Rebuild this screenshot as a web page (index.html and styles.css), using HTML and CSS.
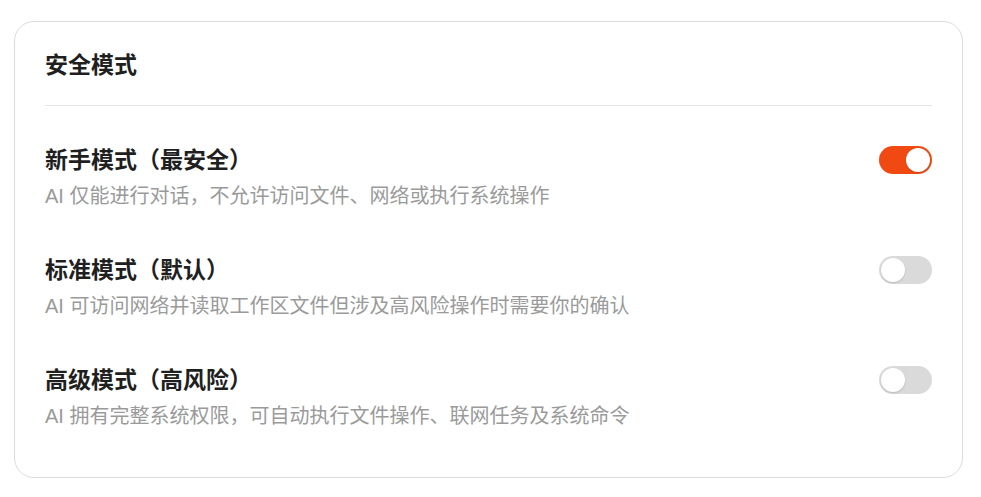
FILE: index.html
```html
<!DOCTYPE html>
<html lang="zh-CN">
<head>
    <meta charset="UTF-8" />
    <meta name="viewport" content="width=device-width, initial-scale=1" />
    <title>安全模式</title>
    <link rel="stylesheet" href="styles.css">
</head>
<body>
    <div class="card">
        <div class="card-header">
            <h2>安全模式</h2>
        </div>

        <div class="mode-list">
            <div class="mode">
                <div class="mode-text">
                    <div class="mode-title">新手模式（最安全）</div>
                    <div class="mode-desc">AI 仅能进行对话，不允许访问文件、网络或执行系统操作</div>
                </div>
                <div class="switch on"><span class="knob"></span></div>
            </div>

            <div class="mode">
                <div class="mode-text">
                    <div class="mode-title">标准模式（默认）</div>
                    <div class="mode-desc">AI 可访问网络并读取工作区文件但涉及高风险操作时需要你的确认</div>
                </div>
                <div class="switch"><span class="knob"></span></div>
            </div>

            <div class="mode">
                <div class="mode-text">
                    <div class="mode-title">高级模式（高风险）</div>
                    <div class="mode-desc">AI 拥有完整系统权限，可自动执行文件操作、联网任务及系统命令</div>
                </div>
                <div class="switch"><span class="knob"></span></div>
            </div>
        </div>
    </div>
</body>
</html>
```

FILE: styles.css
```css
body {
    margin: 0;
    padding: 21px 18px 0 14px;
    background: #fff;
    font-family: "Liberation Sans", "Noto Sans CJK SC", sans-serif;
    color: #1f1f1f;
}

.card {
    border: 1px solid #dcdcdc;
    border-radius: 20px;
    padding: 0 30px 47px 30px;
}

.card-header {
    padding-top: 28px;
    padding-bottom: 25px;
    border-bottom: 1px solid #e5e5e5;
}

h2 {
    margin: 0;
    font-size: 23px;
    line-height: 30px;
    font-weight: 600;
}

.mode-list {
    padding-top: 39px;
    display: flex;
    flex-direction: column;
    gap: 45px;
}

.mode {
    display: flex;
    align-items: flex-start;
    justify-content: space-between;
}

.mode-title {
    font-size: 23px;
    line-height: 30px;
    font-weight: 600;
}

.mode-desc {
    margin-top: 7px;
    font-size: 20px;
    line-height: 28px;
    color: #9a9a9a;
}

.switch {
    position: relative;
    width: 53px;
    height: 28px;
    margin-top: 1px;
    border-radius: 14px;
    background: #dadada;
    flex-shrink: 0;
}

.switch .knob {
    position: absolute;
    top: 2px;
    left: 2px;
    width: 24px;
    height: 24px;
    border-radius: 50%;
    background: #fff;
    box-shadow: 0 1px 2px rgba(0, 0, 0, 0.15);
}

.switch.on {
    background: #f04a12;
}

.switch.on .knob {
    left: 27px;
}
```
